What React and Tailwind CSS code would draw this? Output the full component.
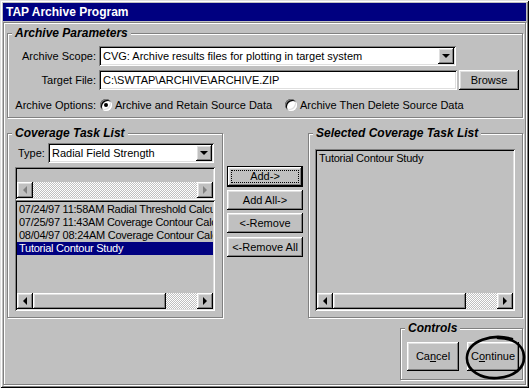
import React from 'react';

const raised = 'shadow-[inset_-1px_-1px_#000,inset_1px_1px_#fff,inset_-2px_-2px_#808080,inset_2px_2px_#dfdfdf]';
const sunken = 'shadow-[inset_1px_1px_#808080,inset_-1px_-1px_#fff,inset_2px_2px_#000,inset_-2px_-2px_#dfdfdf]';
const etched = 'border border-[#808080] shadow-[inset_1px_1px_#fff,1px_1px_#fff]';
const dither = 'bg-[image:repeating-conic-gradient(#fff_0_25%,#c0c0c0_0_50%)] bg-[length:2px_2px]';

function GroupBox({ title, className = '', children }) {
    return (
        <div className={`${etched} ${className}`}>
            <div className="-mt-[8px] ml-[4px] px-[3px] w-fit bg-[#c0c0c0] text-[12px] font-bold italic leading-[14px]">
                {title}
            </div>
            {children}
        </div>
    );
}

function ArrowButton({ dir, disabled }) {
    let arrow;
    if (dir === 'left') {
        arrow = disabled
            ? 'border-y-[4px] border-y-transparent border-r-[4px] border-r-[#808080]'
            : 'border-y-[4px] border-y-transparent border-r-[4px] border-r-black';
    } else if (dir === 'right') {
        arrow = disabled
            ? 'border-y-[4px] border-y-transparent border-l-[4px] border-l-[#808080]'
            : 'border-y-[4px] border-y-transparent border-l-[4px] border-l-black';
    } else {
        arrow = 'border-x-[4px] border-x-transparent border-t-[4px] border-t-black';
    }
    return (
        <div className={`w-[16px] h-[16px] shrink-0 bg-[#c0c0c0] ${raised} flex items-center justify-center`}>
            <div className={`w-0 h-0 ${arrow}`} />
        </div>
    );
}

function HScroll({ thumb, disabled }) {
    return (
        <div className="flex h-[16px] shrink-0">
            <ArrowButton dir="left" disabled={disabled} />
            {thumb && <div className={`w-[133px] shrink-0 bg-[#c0c0c0] ${raised}`} />}
            <div className={`flex-1 ${dither}`} />
            <ArrowButton dir="right" disabled={disabled} />
        </div>
    );
}

function Select({ text, className = '' }) {
    return (
        <div className={`flex h-[20px] bg-white p-[2px] ${sunken} ${className}`}>
            <div className="flex-1 pl-[2px] leading-[16px] whitespace-nowrap overflow-hidden">{text}</div>
            <ArrowButton dir="down" />
        </div>
    );
}

function Radio({ checked }) {
    return (
        <div className="w-[12px] h-[12px] shrink-0 rounded-full bg-white shadow-[inset_1px_1px_#808080,inset_-1px_-1px_#fff,inset_2px_2px_#000,inset_-2px_-2px_#dfdfdf] flex items-center justify-center">
            {checked && <div className="w-[4px] h-[4px] rounded-full bg-black" />}
        </div>
    );
}

function Button({ children, className = '', isDefault }) {
    if (isDefault) {
        return (
            <div className={`border border-black ${className}`}>
                <div className={`w-full h-full bg-[#c0c0c0] ${raised} flex p-[3px]`}>
                    <div className="flex-1 border border-dotted border-black flex items-center justify-center leading-[11px]">
                        {children}
                    </div>
                </div>
            </div>
        );
    }
    return (
        <div className={`bg-[#c0c0c0] ${raised} flex items-center justify-center ${className}`}>
            {children}
        </div>
    );
}

function ListBox({ items, className = '' }) {
    return (
        <div className={`w-[200px] bg-[#c0c0c0] p-[2px] flex flex-col ${sunken} ${className}`}>
            <div className="flex-1 overflow-hidden pt-[1px]">
                {items.map((item) => (
                    <div
                        key={item.label}
                        className={`h-[13px] leading-[13px] pl-[2px] whitespace-nowrap overflow-hidden tracking-[-0.25px] ${item.selected ? 'bg-[#000080] text-white' : ''}`}
                    >
                        {item.label}
                    </div>
                ))}
            </div>
            <HScroll thumb />
        </div>
    );
}

const coverageTasks = [
    { label: '07/24/97 11:58AM Radial Threshold Calculation' },
    { label: '07/25/97 11:43AM Coverage Contour Calculation' },
    { label: '08/04/97 08:24AM Coverage Contour Calculation' },
    { label: 'Tutorial Contour Study', selected: true },
];

export default function App() {
    return (
        <div className="relative w-[529px] h-[388px] overflow-hidden bg-[#c0c0c0] p-[3px] shadow-[inset_1px_1px_#dfdfdf,inset_-1px_-1px_#000,inset_2px_2px_#fff,inset_-2px_-2px_#808080] font-['Liberation_Sans',Arial,sans-serif] text-[11px] text-black">
            <div className="h-[18px] bg-[#000080] pl-[3px] text-white text-[12px] font-bold leading-[18px]">
                TAP Archive Program
            </div>

            <div className={`mt-[1px] h-[363px] pl-[3px] pt-[10px] ${etched}`}>
                <div className="w-[516px] flex flex-col">
                    {/* Archive Parameters */}
                    <GroupBox title="Archive Parameters" className="h-[85px]">
                        <div className="mt-[6px] flex items-center h-[20px]">
                            <div className="w-[88px] text-right">Archive Scope:</div>
                            <Select className="ml-[3px] w-[357px]" text="CVG: Archive results files for plotting in target system" />
                        </div>
                        <div className="mt-[4px] flex items-center h-[20px]">
                            <div className="w-[88px] text-right">Target File:</div>
                            <div className={`ml-[3px] w-[358px] h-[20px] bg-white p-[2px] pl-[4px] leading-[16px] ${sunken}`}>
                                C:\SWTAP\ARCHIVE\ARCHIVE.ZIP
                            </div>
                            <Button className="ml-[2px] w-[60px] h-[20px]">Browse</Button>
                        </div>
                        <div className="mt-[6px] flex items-center h-[18px]">
                            <div className="w-[88px] text-right">Archive Options:</div>
                            <div className="ml-[4px] w-[185px] flex items-center">
                                <Radio checked />
                                <span className="ml-[3px]">Archive and Retain Source Data</span>
                            </div>
                            <Radio />
                            <span className="ml-[3px]">Archive Then Delete Source Data</span>
                        </div>
                    </GroupBox>

                    <div className="mt-[15px] flex items-start">
                        {/* Coverage Task List */}
                        <GroupBox title="Coverage Task List" className="w-[216px] h-[185px]">
                            <div className="pl-[7px]">
                                <div className="mt-[3px] w-[199px] h-[20px] flex items-center">
                                    <span className="ml-[3px]">Type:</span>
                                    <Select className="ml-auto w-[166px]" text="Radial Field Strength" />
                                </div>
                                <div className={`mt-[4px] w-[200px] h-[33px] p-[2px] flex flex-col justify-end ${sunken}`}>
                                    <HScroll disabled />
                                </div>
                                <ListBox items={coverageTasks} className="h-[111px]" />
                            </div>
                        </GroupBox>

                        <div className="ml-[4px] mt-[33px] w-[76px] flex flex-col">
                            <Button isDefault className="h-[21px]">{'Add->'}</Button>
                            <Button className="mt-[3px] h-[20px]">{'Add All->'}</Button>
                            <Button className="mt-[3px] h-[20px]">{'<-Remove'}</Button>
                            <Button className="mt-[4px] h-[20px]">{'<-Remove All'}</Button>
                        </div>

                        {/* Selected Coverage Task List */}
                        <GroupBox title="Selected Coverage Task List" className="ml-[5px] w-[215px] h-[185px]">
                            <div className="pl-[6px] pt-[9px]">
                                <ListBox items={[{ label: 'Tutorial Contour Study' }]} className="h-[162px]" />
                            </div>
                        </GroupBox>
                    </div>

                    {/* Controls */}
                    <GroupBox title="Controls" className="mt-[10px] self-end w-[123px] h-[52px]">
                        <div className="mt-[7px] pl-[6px] flex">
                            <Button className="w-[52px] h-[29px]">
                                <span>Ca<u>n</u>cel</span>
                            </Button>
                            <Button className="ml-[8px] w-[52px] h-[29px]">
                                <span>C<u>o</u>ntinue</span>
                            </Button>
                        </div>
                    </GroupBox>
                </div>
            </div>

            {/* hand drawn circle over the Continue button */}
            <svg className="absolute left-[462px] top-[333px]" width="66" height="50" viewBox="0 0 66 50">
                <path
                    d="M50 6 C30 0, 6 8, 5 24 C4 38, 20 46, 35 45 C52 44, 63 35, 62 23 C61 11, 50 5, 36 5"
                    fill="none"
                    stroke="black"
                    strokeWidth="2.6"
                    strokeLinecap="round"
                />
            </svg>
        </div>
    );
}
